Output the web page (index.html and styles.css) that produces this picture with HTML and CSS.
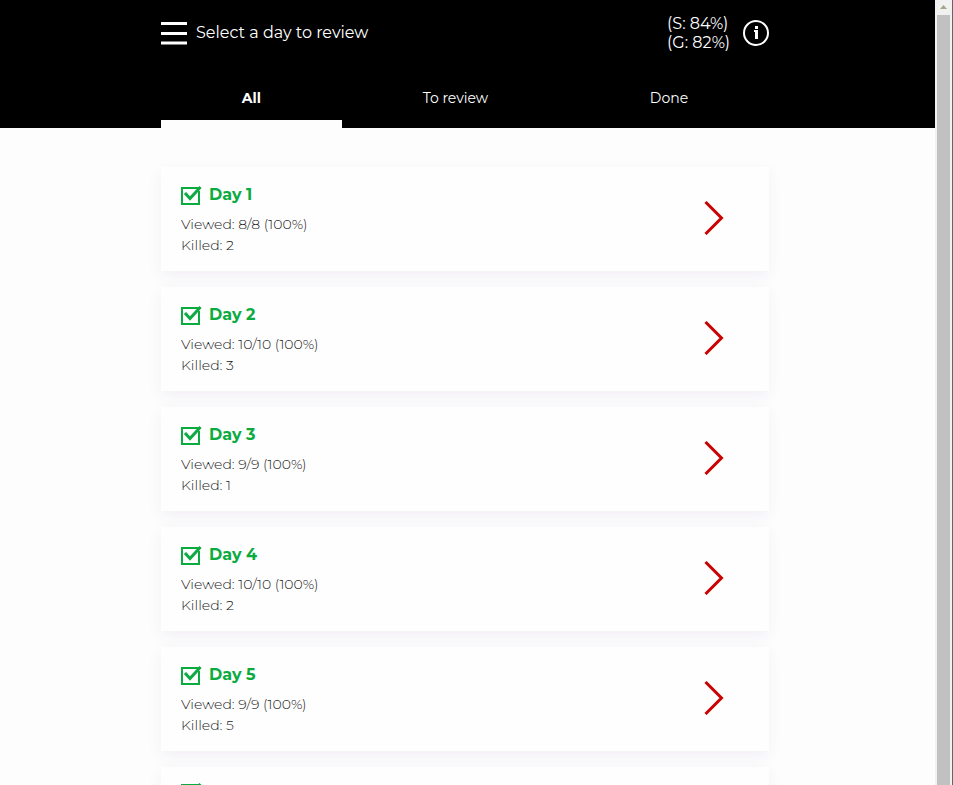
FILE: index.html
```html
<!DOCTYPE html>
<html lang="en">
<head>
    <meta charset="UTF-8">
    <meta name="viewport" content="width=device-width, initial-scale=1.0">
    <title>Select a day to review</title>
    <link rel="stylesheet" href="styles.css">
</head>
<body>
    <svg class="sprite" aria-hidden="true">
        <symbol id="icon-check" viewBox="0 0 22 22">
            <path d="M18 7V20H1V4H18" fill="none" stroke="currentColor" stroke-width="2"/>
            <path d="M4 9L9 14.500L19.500 3" fill="none" stroke="currentColor" stroke-width="3"/>
        </symbol>
        <symbol id="icon-arrow" viewBox="0 0 20 36">
            <path d="M1.500 1L17.500 17L1.500 33" fill="none" stroke="currentColor" stroke-width="3"/>
        </symbol>
    </svg>

    <div class="app">
        <div class="page">
            <header class="header">
                <div class="container">
                    <div class="top-bar">
                        <button class="icon-btn" type="button" aria-label="Menu">
                            <svg width="26" height="24" viewBox="0 0 26 24">
                                <path d="M0 2.500H26M0 12.500H26M0 22H26" stroke="currentColor" stroke-width="3"/>
                            </svg>
                        </button>
                        <h1 class="title">Select a day to review</h1>
                        <p class="score">(S: 84%)<br>(G: 82%)</p>
                        <button class="icon-btn" type="button" aria-label="Information">
                            <svg width="26" height="26" viewBox="0 0 26 26">
                                <circle cx="13" cy="13" r="12" fill="none" stroke="currentColor" stroke-width="2"/>
                                <path d="M12 6H15V9H12ZM11 10H15V19H12V12H11Z" fill="currentColor"/>
                            </svg>
                        </button>
                    </div>
                    <nav class="tabs">
                        <button class="tab active" type="button">All</button>
                        <button class="tab" type="button">To review</button>
                        <button class="tab" type="button">Done</button>
                    </nav>
                </div>
            </header>

            <main class="container day-list">
                <a class="day-card" href="#day-1">
                    <div>
                        <h2 class="day-name"><svg class="check"><use href="#icon-check"/></svg>Day 1</h2>
                        <p>Viewed: 8/8 (100%)</p>
                        <p>Killed: 2</p>
                    </div>
                    <svg class="arrow"><use href="#icon-arrow"/></svg>
                </a>
                <a class="day-card" href="#day-2">
                    <div>
                        <h2 class="day-name"><svg class="check"><use href="#icon-check"/></svg>Day 2</h2>
                        <p>Viewed: 10/10 (100%)</p>
                        <p>Killed: 3</p>
                    </div>
                    <svg class="arrow"><use href="#icon-arrow"/></svg>
                </a>
                <a class="day-card" href="#day-3">
                    <div>
                        <h2 class="day-name"><svg class="check"><use href="#icon-check"/></svg>Day 3</h2>
                        <p>Viewed: 9/9 (100%)</p>
                        <p>Killed: 1</p>
                    </div>
                    <svg class="arrow"><use href="#icon-arrow"/></svg>
                </a>
                <a class="day-card" href="#day-4">
                    <div>
                        <h2 class="day-name"><svg class="check"><use href="#icon-check"/></svg>Day 4</h2>
                        <p>Viewed: 10/10 (100%)</p>
                        <p>Killed: 2</p>
                    </div>
                    <svg class="arrow"><use href="#icon-arrow"/></svg>
                </a>
                <a class="day-card" href="#day-5">
                    <div>
                        <h2 class="day-name"><svg class="check"><use href="#icon-check"/></svg>Day 5</h2>
                        <p>Viewed: 9/9 (100%)</p>
                        <p>Killed: 5</p>
                    </div>
                    <svg class="arrow"><use href="#icon-arrow"/></svg>
                </a>
                <a class="day-card" href="#day-6" aria-label="Day 6">
                    <div class="day-name"><svg class="check"><use href="#icon-check"/></svg></div>
                </a>
            </main>
        </div>

        <div class="scrollbar" aria-hidden="true">
            <svg class="scroll-up" width="7" height="4" viewBox="0 0 7 4">
                <path d="M0 4L3.500 0L7 4Z" fill="#9aaa88"/>
            </svg>
            <div class="scroll-thumb"></div>
        </div>
    </div>
</body>
</html>
```
FILE: styles.css
```css
* {
    margin: 0;
    padding: 0;
    box-sizing: border-box;
}

body {
    font-family: Montserrat, Inter, sans-serif;
    background: #fdfdfd;
    color: #222;
}

button {
    font-family: inherit;
    color: inherit;
    background: none;
    border: none;
    cursor: pointer;
}

.sprite {
    display: none;
}

.app {
    display: flex;
    height: 100vh;
    overflow: hidden;
}

.page {
    flex: 1;
    overflow: hidden;
}

.container {
    max-width: 608px;
    margin: 0 auto;
}

/* Header */
.header {
    background: #000;
    color: #fff;
    padding: 14px 5px 0 0;
}

.top-bar {
    display: flex;
    align-items: center;
    height: 38px;
}

.icon-btn {
    display: flex;
}

.title {
    flex: 1;
    margin-left: 9px;
    font-size: 16px;
    font-weight: 400;
    line-height: 18px;
}

.score {
    margin-right: 13px;
    font-size: 16px;
    line-height: 19px;
}

.tabs {
    display: flex;
    margin-top: 24px;
}

.tab {
    flex: 1 1 auto;
    height: 52px;
    border-bottom: 8px solid transparent;
    font-size: 14px;
}

.tab.active {
    border-bottom-color: #fdfdfd;
    font-weight: 700;
}

/* Day cards */
.day-list {
    display: flex;
    flex-direction: column;
    gap: 16px;
    max-width: 613px;
    padding: 39px 5px 40px 0;
}

.day-card {
    display: flex;
    align-items: center;
    justify-content: space-between;
    padding: 14px 45px 15px 20px;
    background: #fefefe;
    box-shadow: 0 5px 15px rgba(70, 20, 140, 0.06);
    color: #222;
    font-size: 14px;
    font-weight: 300;
    line-height: 21px;
    text-decoration: none;
}

.day-name {
    display: flex;
    align-items: center;
    gap: 6px;
    margin-bottom: 6px;
    color: #0bab40;
    font-size: 16px;
    font-weight: 700;
    line-height: 27px;
}

.check {
    width: 22px;
    height: 22px;
}

.arrow {
    width: 20px;
    height: 36px;
    color: #cb0000;
}

/* Scrollbar */
.scrollbar {
    display: flex;
    flex-direction: column;
    align-items: center;
    width: 18px;
    padding: 5px 2px 0;
    background: #f1f1f1;
    border-right: 1px solid #666;
}

.scroll-up {
    margin-bottom: 6px;
}

.scroll-thumb {
    flex: 1;
    width: 100%;
    background: #c1c1c1;
}
```
